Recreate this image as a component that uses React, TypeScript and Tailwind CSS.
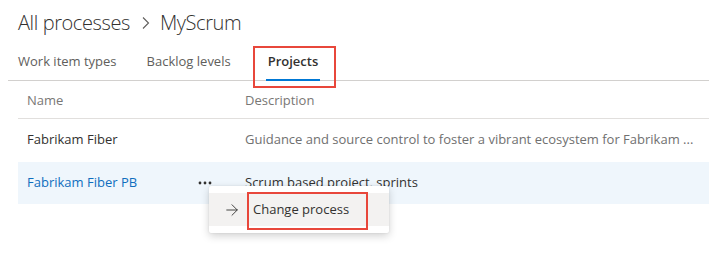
import { ArrowRight } from "lucide-react";

const font = { fontFamily: '"Segoe UI", "Open Sans", "Liberation Sans", sans-serif' };

function RedBox({ className = "" }: { className?: string }) {
  return (
    <div
      className={`pointer-events-none absolute border-2 border-[#e8473b] ${className}`}
    />
  );
}

function MoreDots() {
  return (
    <svg width="14" height="4" viewBox="0 0 14 4" className="text-[#323130]" aria-hidden="true">
      <circle cx="2" cy="2" r="1.4" fill="currentColor" />
      <circle cx="7" cy="2" r="1.4" fill="currentColor" />
      <circle cx="12" cy="2" r="1.4" fill="currentColor" />
    </svg>
  );
}

export default function App() {
  return (
    <div
      className="relative h-[268px] w-[709px] overflow-hidden bg-white text-[#323130]"
      style={font}
    >
      <h1
        className="flex items-center pl-[18px] pt-[9px] text-[20px] font-light leading-[28px] tracking-[-0.4px] text-[#323130]"
        style={{ fontFamily: '"Open Sans", "Liberation Sans", sans-serif' }}
      >
        <span>All processes</span>
        <svg width="10" height="14" viewBox="0 0 10 14" className="ml-[11px] mr-[9px] text-[#605e5c]" aria-hidden="true">
          <path d="M2 1.5 L7.5 7 L2 12.5" fill="none" stroke="currentColor" strokeWidth="1.1" />
        </svg>
        <span>MyScrum</span>
      </h1>

      <div className="ml-[8px] mt-[15px] flex items-end border-b border-[#d2d0ce] pl-[10px] text-[13px] text-[#605e5c]">
        <div className="pb-[8px]">Work item types</div>
        <div className="ml-[30px] pb-[8px]">Backlog levels</div>
        <div className="relative ml-[37px] pb-[8px] font-semibold text-[#323130]">
          Projects
          <div className="absolute bottom-[-1px] left-[-2px] right-[-2px] h-[2px] bg-[#0078d4]" />
        </div>
      </div>

      <div className="ml-[18px] text-[13px]">
        <div className="flex h-[38px] items-center border-b border-[#e1dfdd] pt-[4px] text-[#797775]">
          <div className="w-[227px] pl-[9px]">Name</div>
          <div>Description</div>
        </div>
        <div className="flex h-[43px] items-center text-[#323130]">
          <div className="w-[227px] pl-[9px]">Fabrikam Fiber</div>
          <div className="whitespace-nowrap text-[#707070]">
            Guidance and source control to foster a vibrant ecosystem for Fabrikam ...
          </div>
        </div>
        <div className="flex h-[42px] items-center bg-[#eff6fc]">
          <div className="flex w-[227px] items-center pl-[9px]">
            <span className="text-[#106ebe]">Fabrikam Fiber PB</span>
            <span className="ml-auto mr-[33px] pt-[1px]">
              <MoreDots />
            </span>
          </div>
          <div className="text-[#323130]">Scrum based project, sprints</div>
        </div>
      </div>

      <div className="absolute left-[209px] top-[186px] w-[180px] rounded-[2px] bg-white py-[7px] shadow-[0_3px_8px_rgba(0,0,0,0.18),0_0_2px_rgba(0,0,0,0.1)]">
        <div className="flex h-[33px] items-center bg-[#f3f2f1] text-[13px] text-[#323130]">
          <ArrowRight className="ml-[14px] h-[18px] w-[18px] text-[#323130]" strokeWidth={1.2} />
          <span className="ml-[12px]">Change process</span>
        </div>
      </div>

      <RedBox className="left-[253px] top-[46px] h-[42px] w-[83px]" />
      <RedBox className="left-[247px] top-[192px] h-[38px] w-[121px]" />
    </div>
  );
}
